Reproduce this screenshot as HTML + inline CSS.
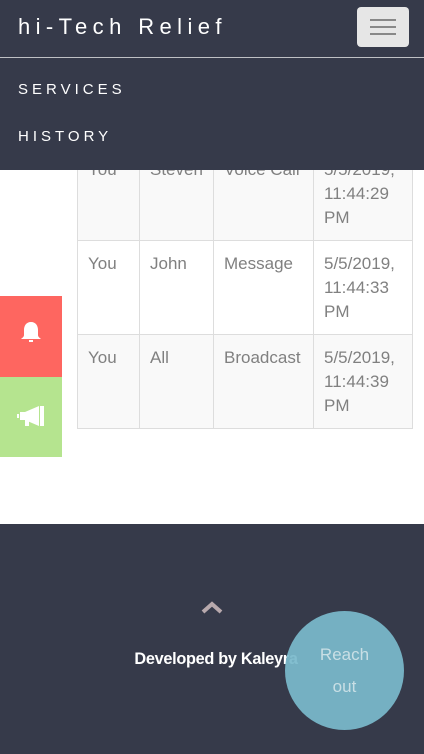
<!DOCTYPE html>
<html><head><meta charset="utf-8"><style>
*{margin:0;padding:0;box-sizing:border-box}
body{width:424px;height:754px;overflow:hidden;background:#fff;font-family:"Liberation Sans",sans-serif;position:relative}
.hdr{position:absolute;left:0;top:0;width:424px;height:170px;background:#363a4a;z-index:5}
.brand{position:absolute;left:18px;top:14px;color:#fff;font-size:22px;letter-spacing:5.4px}
.tog{position:absolute;left:357px;top:7px;width:52px;height:40px;background:#e6e6e6;border-radius:4px}
.tog i{position:absolute;left:13px;width:26px;height:2px;background:#888}
.line{position:absolute;left:0;top:57px;width:424px;height:1px;background:#bfc0c4}
.nav{position:absolute;left:18px;color:#fff;font-size:15px;letter-spacing:4px}
table{position:absolute;left:77px;top:146px;border-collapse:collapse;font-size:17px;color:#808080}
td{border:1px solid #ddd;vertical-align:top;padding:11px 10px 0;line-height:24px;height:94px}
tr.g td{background:#f9f9f9}
.red{position:absolute;left:0;top:296px;width:62px;height:81px;background:#fe6660}
.grn{position:absolute;left:0;top:377px;width:62px;height:80px;background:#b5e48f}
.foot{position:absolute;left:0;top:524px;width:424px;height:230px;background:#363a4a}
.dev{position:absolute;left:4px;width:424px;text-align:center;top:126px;color:#fff;font-weight:bold;font-size:16.3px;letter-spacing:-0.3px}
.reach{position:absolute;left:285px;top:611px;width:119px;height:119px;border-radius:50%;background:rgba(122,185,203,0.93);color:#c9dfe5;font-size:17px;text-align:center;padding-top:28px;line-height:32px}
</style></head><body>
<table>
<tr class="g"><td style="width:62px">You</td><td style="width:74px">Steven</td><td style="width:100px">Voice Call</td><td style="width:99px">5/5/2019,<br>11:44:29<br>PM</td></tr>
<tr><td>You</td><td>John</td><td>Message</td><td>5/5/2019,<br>11:44:33<br>PM</td></tr>
<tr class="g"><td>You</td><td>All</td><td>Broadcast</td><td>5/5/2019,<br>11:44:39<br>PM</td></tr>
</table>
<div class="hdr">
<div class="brand">hi-Tech Relief</div>
<div class="tog"><i style="top:12px"></i><i style="top:19px"></i><i style="top:26px"></i></div>
<div class="line"></div>
<div class="nav" style="top:81px">SERVICES</div>
<div class="nav" style="top:128px">HISTORY</div>
</div>
<div class="red"><svg width="62" height="81" viewBox="0 0 62 81"><path d="M31 26c-5 0-7 4-7 8v5c0 2-2 3-3 4h20c-1-1-3-2-3-4v-5c0-4-2-8-7-8z" fill="#fff"/><rect x="29" y="44" width="4" height="2" fill="#fff"/></svg></div>
<div class="grn"><svg width="62" height="80" viewBox="0 0 62 80"><path d="M20 35h5l14-6v20l-14-6h-5z" fill="#fff"/><rect x="40" y="29" width="4" height="20" fill="#fff"/><rect x="25" y="43" width="4" height="6" fill="#fff"/><rect x="17" y="37" width="2" height="4" fill="#fff"/></svg></div>
<div class="foot">
<svg style="position:absolute;left:201px;top:76px" width="22" height="14" viewBox="0 0 22 14"><path d="M2 12L11 4l9 8" stroke="#b8a9ad" stroke-width="4" fill="none"/></svg>
<div class="dev">Developed by Kaleyra</div>
</div>
<div class="reach">Reach<br>out</div>
</body></html>
